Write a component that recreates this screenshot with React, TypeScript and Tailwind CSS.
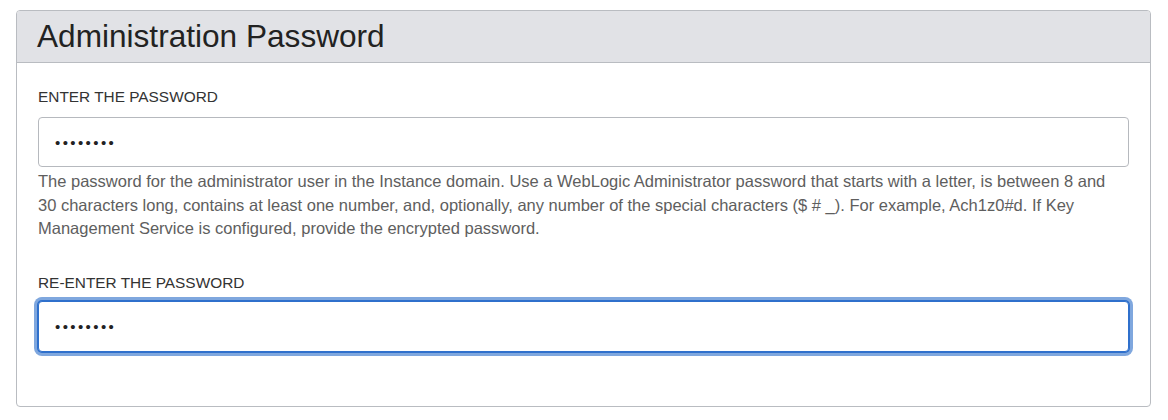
const HELP =
  "The password for the administrator user in the Instance domain. Use a WebLogic Administrator password that starts with a letter, is between 8 and 30 characters long, contains at least one number, and, optionally, any number of the special characters ($ # _). For example, Ach1z0#d. If Key Management Service is configured, provide the encrypted password.";

function PasswordField({ focused = false }: { focused?: boolean }) {
  return (
    <input
      type="text"
      readOnly
      value="••••••••"
      className={
        focused
          ? "block h-[51px] w-full rounded-[4px] border border-[#2f70cc] bg-white pl-[16px] text-[15px] tracking-[2.4px] text-[#222] shadow-[0_0_0_1px_#2f70cc,0_0_0_4px_#7fa7de] outline-none"
          : "block h-[50px] w-full rounded-[4px] border border-[#b6b9be] bg-white pl-[16px] text-[15px] tracking-[2.4px] text-[#222] outline-none"
      }
    />
  );
}

export default function App() {
  return (
    <div className="min-h-[420px] bg-white pl-[16px] pr-[17px] pt-[10px] font-['Liberation_Sans',Arial,sans-serif]">
      <section className="overflow-hidden rounded-[4px] border border-[#b9bcc1]">
        <header className="h-[52px] border-b border-[#b9bcc1] bg-[#e1e2e6] px-[20px]">
          <h1 className="text-[31.6px] leading-[51px] text-[#222]">Administration Password</h1>
        </header>

        <div className="px-[21px] pb-[54px] pt-[24px]">
          <label className="block text-[15.4px] leading-[20px] text-[#333]">ENTER THE PASSWORD</label>
          <div className="mt-[10px]">
            <PasswordField />
          </div>
          <p className="pr-[20px] pt-[3px] text-[16.5px] leading-[23.5px] text-[#5e5e5e]">{HELP}</p>

          <label className="mt-[32px] block text-[15.4px] leading-[20px] text-[#333]">RE-ENTER THE PASSWORD</label>
          <div className="mt-[8px]">
            <PasswordField focused />
          </div>
        </div>
      </section>
    </div>
  );
}
